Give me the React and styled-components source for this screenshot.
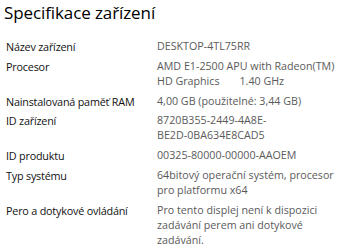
import React from "react";
import styled, { createGlobalStyle } from "styled-components";

const Global = createGlobalStyle`
  html, body { margin: 0; padding: 0; background: #ffffff; }
  body { font-family: "Open Sans", "Noto Sans", sans-serif; }
`;

const Page = styled.div`
  width: 340px;
  height: 248px;
  overflow: hidden;
  background: #fff;
  padding: 0 0 0 4px;
  box-sizing: border-box;
`;

const Title = styled.h1`
  margin: 0;
  font-weight: 400;
  font-size: 17px;
  line-height: 25px;
  color: #000;
  letter-spacing: -0.1px;
`;

const List = styled.div`
  display: grid;
  grid-template-columns: 151px 1fr;
  row-gap: 4.8px;
  margin-top: 14px;
  padding-left: 2px;
  line-height: 15px;
  white-space: nowrap;
`;

const Label = styled.div`
  color: #111;
  font-size: 10.8px;
  letter-spacing: -0.2px;
`;

const Value = styled.div`
  color: #5a5a5a;
  font-size: 10.7px;
`;

const Gap = styled.span`
  display: inline-block;
  width: 20px;
`;

const rows = [
  ["Název zařízení", "DESKTOP-4TL75RR"],
  ["Procesor", <>AMD E1-2500 APU with Radeon(TM)<br />HD Graphics<Gap />1.40 GHz</>],
  ["Nainstalovaná paměť RAM", "4,00 GB (použitelné: 3,44 GB)"],
  ["ID zařízení", <>8720B355-2449-4A8E-<br />BE2D-0BA634E8CAD5</>],
  ["ID produktu", "00325-80000-00000-AAOEM"],
  ["Typ systému", <>64bitový operační systém, procesor<br />pro platformu x64</>],
  ["Pero a dotykové ovládání", <>Pro tento displej není k dispozici<br />zadávání perem ani dotykové<br />zadávání.</>],
];

export default function App() {
  return (
    <Page>
      <Global />
      <Title>Specifikace zařízení</Title>
      <List>
        {rows.map(([l, v], i) => (
          <React.Fragment key={i}>
            <Label>{l}</Label>
            <Value>{v}</Value>
          </React.Fragment>
        ))}
      </List>
    </Page>
  );
}
